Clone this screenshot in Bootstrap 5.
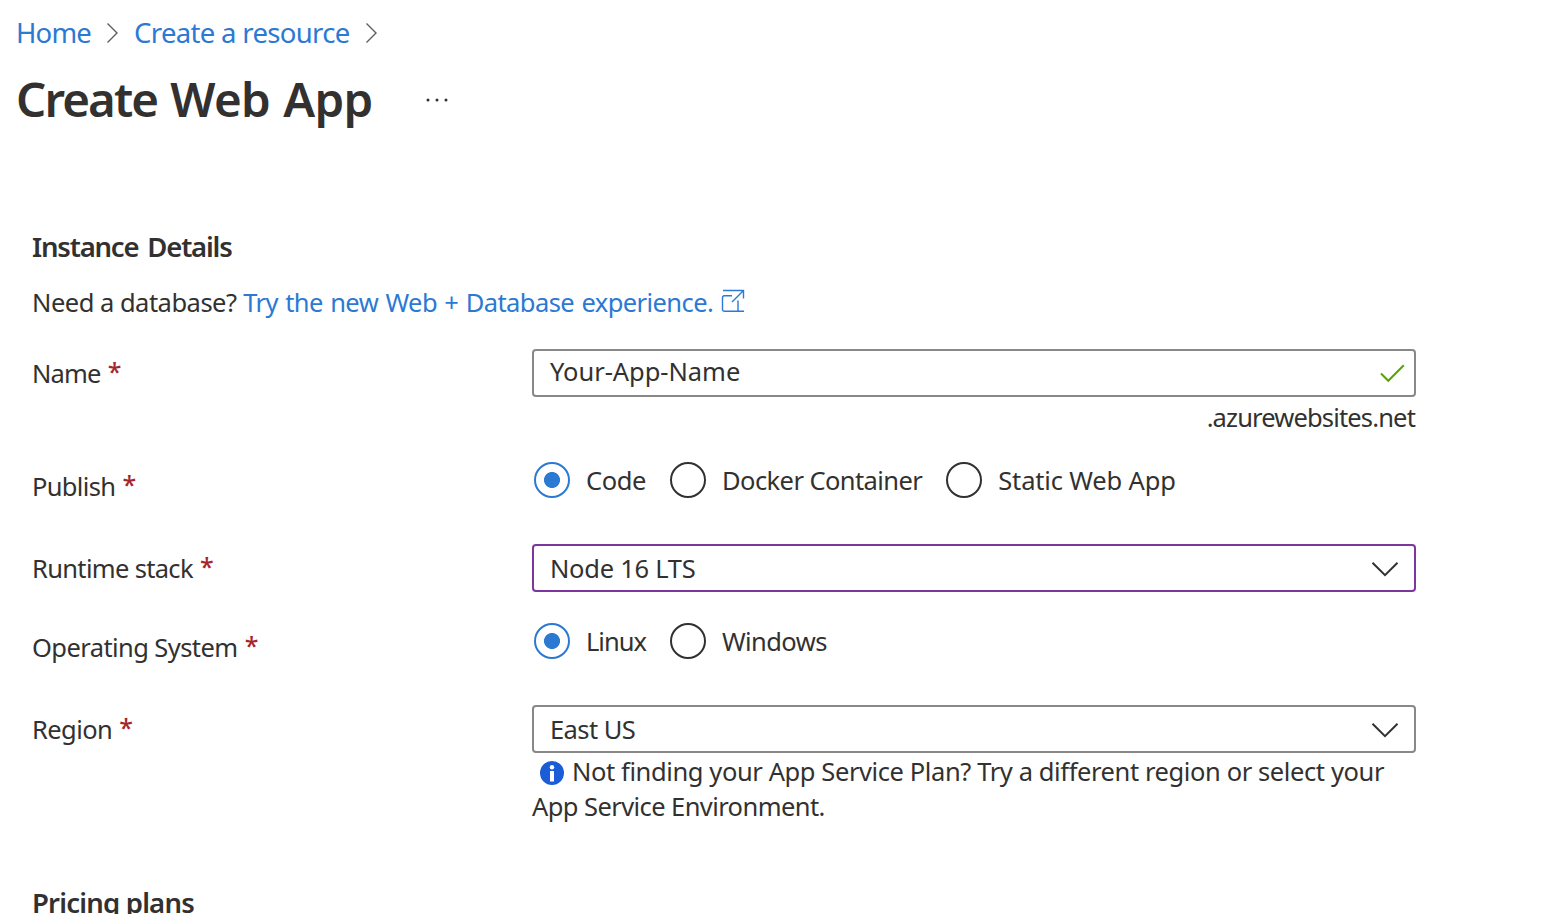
<!DOCTYPE html>
<html lang="en">
<head>
<meta charset="utf-8">
<meta name="viewport" content="width=device-width, initial-scale=1">
<title>Create Web App</title>
<link href="https://cdn.jsdelivr.net/npm/bootstrap@5.3.0/dist/css/bootstrap.min.css" rel="stylesheet">
<style>
  body { font-family: "Noto Sans", "Open Sans", sans-serif; font-size: 25.5px; line-height: 36px; color: #323130; background: #fff; height: 914px; overflow: hidden; }
  a { color: #2b79d3; text-decoration: none; }
  .crumbs { height: 66px; padding: 15px 0 0 16px; font-size: 27.5px; }
  .crumbs svg { margin: 0 15px 0 14px; }
  .blade-title { font-size: 47.5px; line-height: 64px; font-weight: 600; margin: 1px 0 0; word-spacing: 1.5px; }
  .title-row { height: 163px; padding-left: 16px; }
  .section-title { font-size: 27.5px; line-height: 36px; font-weight: 600; margin: 0; }
  .form-body { padding-left: 32px; width: 1416px; }
  .intro { height: 65px; margin-top: 19px; }
  .intro svg { vertical-align: -1px; margin-left: 1px; }
  .link-text { letter-spacing: -.58px; word-spacing: 1.3px; }
  .field { display: grid; grid-template-columns: 500px 884px; }
  .field-label { padding-top: 6px; }
  .req { color: #a4262c; font-size: 25px; line-height: 1; font-weight: 500; vertical-align: 2px; margin-left: .5px; }
  .box { height: 48px; border: 2px solid #8a8886; border-radius: 4px; padding: 0 10px 0 16px; }
  .box.active-box { border-color: #7d35a0; }
  .name-box { padding-bottom: 4px; }
  .name-box svg { margin: 3px -1px 0 0; }
  .chev { margin: 2px 5px 0 0; }
  .h-name { height: 113px; } .h-publish { height: 82px; } .h-runtime { height: 79px; } .h-os { height: 82px; } .h-region { height: 180px; }
  .suffix { padding: 2px 1px 0 0; }
  .options { height: 36px; padding-left: 2px; gap: 24px; }
  .ring { width: 36px; height: 36px; border: 2px solid #323130; border-radius: 50%; margin-right: 16px; flex: none; }
  .ring.on { border-color: #2b79d3; background: radial-gradient(circle, #2b79d3 7.6px, transparent 8.4px); }
  .note { line-height: 35px; margin-top: 1px; white-space: nowrap; }
  .note svg { margin: 0 8px; vertical-align: -4px; }
  /* tracking steps that bring the face close to Segoe UI */
  .k0 { letter-spacing: -.05px; } .k1 { letter-spacing: -.16px; } .k2 { letter-spacing: -.27px; }
  .k3 { letter-spacing: -.4px; } .k4 { letter-spacing: -.5px; } .k5 { letter-spacing: -.58px; }
  .k6 { letter-spacing: -.67px; } .k7 { letter-spacing: -.8px; } .k8 { letter-spacing: -.85px; }
  .k9 { letter-spacing: -1px; } .k20 { letter-spacing: -1.9px; }
  .blade-title.k9 { letter-spacing: -.7px; }
  .section-title.k9 { letter-spacing: -1.2px; word-spacing: 3px; }
</style>
</head>
<body>
<nav class="crumbs d-flex align-items-start" aria-label="Breadcrumb">
  <a href="#" class="k7">Home</a>
  <svg width="14" height="36" viewBox="0 0 14 36" fill="none" stroke="#605e5c" stroke-width="1.4"><path d="M2.5 8.5 12 18 2.5 27.5"/></svg>
  <a href="#" class="k6">Create a resource</a>
  <svg width="14" height="36" viewBox="0 0 14 36" fill="none" stroke="#605e5c" stroke-width="1.4"><path d="M2.5 8.5 12 18 2.5 27.5"/></svg>
</nav>
<header class="title-row d-flex align-items-start">
  <h1 class="blade-title k9"><span class="k20">Create</span> Web App</h1>
  <svg class="ms-5" width="32" height="64" viewBox="0 0 32 64" fill="#323130"><circle cx="7" cy="34" r="1.5"/><circle cx="16" cy="34" r="1.5"/><circle cx="25" cy="34" r="1.5"/></svg>
</header>
<main class="form-body">
  <h2 class="section-title k9">Instance Details</h2>
  <div class="intro"><span class="k4">Need a database?</span> <a href="#"><span class="link-text">Try the new Web + Database experience.</span>
    <svg width="24" height="24" viewBox="0 0 24 24" fill="none" stroke="#2b79d3" stroke-width="1.4"><path d="M2 1.5H22.5V9.5M22.5 1.5 11 13M11 6.8H3.2Q1.5 6.8 1.5 8.5V20.5Q1.5 22.2 3.2 22.2H23M17 11.5V22.2"/></svg></a></div>
  <div class="field h-name">
    <div class="field-label"><span class="k8">Name</span> <span class="req">*</span></div>
    <div>
      <div class="box name-box d-flex align-items-center justify-content-between"><span class="k0">Your-App-Name</span>
        <svg width="26" height="20" viewBox="0 0 26 20" fill="none" stroke="#57a300" stroke-width="2"><path d="M2 10.5 9.3 17.8 24.8 2.3"/></svg></div>
      <div class="suffix text-end"><span class="k8">.azurewebsites.net</span></div>
    </div>
  </div>
  <div class="field h-publish">
    <div class="field-label"><span class="k6">Publish</span> <span class="req">*</span></div>
    <div class="options d-flex">
      <div class="d-flex"><span class="ring on"></span><span class="k3">Code</span></div>
      <div class="d-flex"><span class="ring"></span><span class="k5">Docker Container</span></div>
      <div class="d-flex"><span class="ring"></span><span class="k1">Static Web App</span></div>
    </div>
  </div>
  <div class="field h-runtime">
    <div class="field-label"><span class="k6">Runtime stack</span> <span class="req">*</span></div>
    <div class="box active-box d-flex align-items-center justify-content-between"><span class="k2">Node 16 LTS</span>
      <svg class="chev" width="28" height="16" viewBox="0 0 28 16" fill="none" stroke="#323130" stroke-width="2"><path d="M1.5 1.7 14 14.2 26.5 1.7"/></svg></div>
  </div>
  <div class="field h-os">
    <div class="field-label"><span class="k5">Operating System</span> <span class="req">*</span></div>
    <div class="options d-flex">
      <div class="d-flex"><span class="ring on"></span><span class="k9">Linux</span></div>
      <div class="d-flex"><span class="ring"></span><span class="k5">Windows</span></div>
    </div>
  </div>
  <div class="field h-region">
    <div class="field-label"><span class="k5">Region</span> <span class="req">*</span></div>
    <div>
      <div class="box d-flex align-items-center justify-content-between"><span class="k5">East US</span>
        <svg class="chev" width="28" height="16" viewBox="0 0 28 16" fill="none" stroke="#323130" stroke-width="2"><path d="M1.5 1.7 14 14.2 26.5 1.7"/></svg></div>
      <div class="note"><svg width="24" height="24" viewBox="0 0 24 24"><circle cx="12" cy="12" r="12" fill="#1b5dd6"/><circle cx="12" cy="6.3" r="2.2" fill="#fff"/><path d="M10 10h4v10.5h-4z" fill="#fff"/></svg><span class="k3">Not finding your App Service Plan? Try a different region or select your</span><br><span class="k5">App Service Environment.</span></div>
    </div>
  </div>
  <h2 class="section-title k7">Pricing plans</h2>
</main>
</body>
</html>
